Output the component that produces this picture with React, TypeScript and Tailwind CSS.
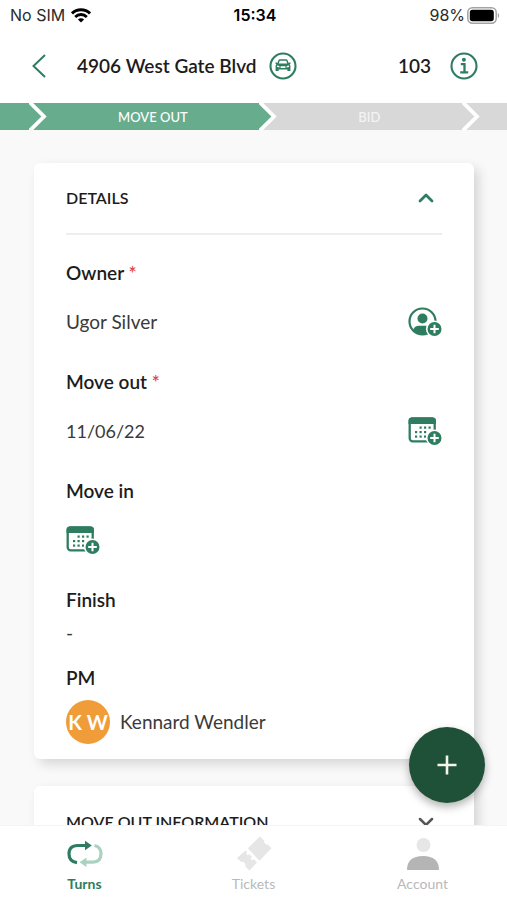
import React from 'react';
import { ChevronDown, ChevronUp } from 'lucide-react';

function WifiIcon() {
  return (
    <svg viewBox="0 0 20 15" className="w-5 h-[15px]" fill="none" stroke="#000" strokeWidth="2.9" aria-hidden="true">
      <path d="M1 5.4a12.8 12.8 0 0 1 18 0" />
      <path d="M4.2 8.9a8.2 8.2 0 0 1 11.6 0" />
      <path d="M10 14.6 6.9 11.5a4.4 4.4 0 0 1 6.2 0Z" fill="#000" stroke="none" />
    </svg>
  );
}

function BatteryIcon() {
  return (
    <svg viewBox="0 0 33 17" className="w-[33px] h-[17px]" aria-hidden="true">
      <rect x="0.8" y="0.8" width="28.4" height="15.4" rx="4.6" fill="#fff" stroke="#a3a3a3" strokeWidth="1.5" />
      <rect x="2.8" y="2.8" width="24" height="11.4" rx="2.6" fill="#000" />
      <path d="M30.8 6v5c1.8-.8 1.8-4.2 0-5Z" fill="#a3a3a3" />
    </svg>
  );
}

function CarIcon() {
  return (
    <svg viewBox="0 0 28 28" className="w-7 h-7" fill="none" stroke="#2f7d61" aria-hidden="true">
      <circle cx="14" cy="14" r="12.5" strokeWidth="2.1" />
      <path d="M8.9 12.1 10 8.6q.2-.7 1-.7h6q.8 0 1 .7l1.1 3.5" strokeWidth="1.5" />
      <path
        fill="#2f7d61"
        stroke="none"
        fillRule="evenodd"
        d="M6.5 10.6h1.9l.6 1h10l.6-1h1.9v1.2l-.9.5q.8.7.8 1.7v5h-3v-1.4H9.6V19h-3v-5q0-1 .8-1.7l-.9-.5ZM8 13.5v1.4l2.4.5v-1.3ZM20 13.5v1.4l-2.4.5v-1.3ZM11.6 14.2h4.8v1.8h-4.8Z"
      />
    </svg>
  );
}

function InfoIcon() {
  return (
    <svg viewBox="0 0 28 28" className="w-7 h-7" fill="none" stroke="#2f7d61" aria-hidden="true">
      <circle cx="14" cy="14" r="12.5" strokeWidth="2.1" />
      <circle cx="13.9" cy="7.8" r="2" fill="#2f7d61" stroke="none" />
      <path d="M10.8 12.2h3.7v7.6M10.2 20.3h8" strokeWidth="2.3" />
    </svg>
  );
}

function PlusBadge() {
  return (
    <>
      <circle cx="26.5" cy="22" r="8.6" fill="#fff" />
      <circle cx="26.5" cy="22" r="7" fill="#2f7d61" />
      <path d="M26.5 17.7v8.6M22.2 22h8.6" stroke="#fff" strokeWidth="2" />
    </>
  );
}

function OwnerAddIcon() {
  return (
    <svg viewBox="0 0 34 30" className="w-[34px] h-[30px]" aria-hidden="true">
      <circle cx="14.5" cy="14.5" r="13" fill="none" stroke="#2f7d61" strokeWidth="2.2" />
      <circle cx="14.5" cy="11.5" r="5" fill="#2f7d61" />
      <path d="M5 23q1.5-4.3 6-4.3h7q5 0 6 4.3a13 13 0 0 1-19 0Z" fill="#2f7d61" />
      <PlusBadge />
    </svg>
  );
}

const calendarDots = [
  [12.5, 11.5], [17, 11.5], [21.5, 11.5],
  [8, 16], [12.5, 16], [17, 16],
  [8, 20.5], [12.5, 20.5], [17, 20.5],
];

function CalendarAddIcon() {
  return (
    <svg viewBox="0 0 34 30" className="w-[34px] h-[30px]" aria-hidden="true">
      <rect x="1.7" y="2.5" width="25" height="22.8" rx="3" fill="#fff" stroke="#2f7d61" strokeWidth="2.3" />
      <path d="M.5 8V4.5q0-3 3-3H25q3 0 3 3V8Z" fill="#2f7d61" />
      {calendarDots.map(([x, y]) => (
        <rect key={`${x}-${y}`} x={x - 1} y={y - 1} width="2.2" height="2.2" fill="#2f7d61" />
      ))}
      <PlusBadge />
    </svg>
  );
}

function TurnsIcon() {
  return (
    <svg viewBox="0 0 36 28" className="w-9 h-7" fill="none" strokeWidth="3.2" aria-hidden="true">
      <path d="M27.5 5.5q6.5 1.5 6.5 8 0 8.5-8 8.700H17" stroke="#a9d2c1" />
      <path d="M19.5 17.500v9.400L12.500 22.200Z" fill="#a9d2c1" />
      <path d="M10 22.700q-8-1.200-8-8.700 0-8.500 8.500-8.500h8" stroke="#2f7d61" />
      <path d="M18 .8v9.400l6.800-4.700Z" fill="#2f7d61" />
    </svg>
  );
}

function TicketsIcon() {
  return (
    <svg viewBox="0 0 36 36" className="w-9 h-9" fill="#e6e6e6" aria-hidden="true">
      <path d="M11.8 12.2 23.8.4l4.400 4a3.500 3.500 0 0 0 3.600 4.200l3.700 3.600L23.500 24.800Z" />
      <path d="m9.700 14.500 1.600 1.500-1.300 1.400 1.800 2 1.400-1.300 2.800 3-1.400 1.300 1.800 2 1.400-1.300 3.200 3.300-7.400 8-4.300-4a3.500 3.500 0 0 0-4-4.500L.8 22Z" />
    </svg>
  );
}

function AccountIcon() {
  return (
    <svg viewBox="0 0 34 34" className="w-[34px] h-[34px]" aria-hidden="true">
      <circle cx="17.5" cy="8" r="7" fill="#e6e6e6" />
      <path d="M1 33q0-14 16-14t16 14Z" fill="#b5b5b5" />
    </svg>
  );
}

type SeparatorProps = { from: string; to: string };

function StepSeparator({ from, to }: SeparatorProps) {
  return (
    <svg viewBox="0 0 18 27" className="w-[18px] h-[27px] shrink-0" aria-hidden="true">
      <rect width="18" height="27" fill={to} />
      <path d="M0 0 15 13.5 0 27Z" fill={from} />
      <path d="M0-1.5 15 13.5 0 28.5" fill="none" stroke="#fff" strokeWidth="3.8" />
    </svg>
  );
}

function Stepper() {
  return (
    <div className="shrink-0 flex h-[27px] text-[13px] leading-7 font-medium text-white">
      <div className="w-[29px] bg-[#68ac8e]" />
      <StepSeparator from="#68ac8e" to="#68ac8e" />
      <button className="flex-[8] bg-[#68ac8e]">MOVE OUT</button>
      <StepSeparator from="#68ac8e" to="#d8d8d8" />
      <button className="flex-[7] bg-[#d8d8d8] text-[#f4f4f4]">BID</button>
      <StepSeparator from="#d8d8d8" to="#d8d8d8" />
      <div className="w-[27px] bg-[#d8d8d8]" />
    </div>
  );
}

function Label({ children, required }: { children: React.ReactNode; required?: boolean }) {
  return (
    <h3 className="text-[19px] leading-6 font-semibold text-[#1c1c1c]">
      {children}
      {required && <span className="text-[#e0483e]"> *</span>}
    </h3>
  );
}

export default function App() {
  return (
    <div className="h-screen flex flex-col bg-white overflow-hidden font-['Lato',sans-serif] text-[#1c1c1c]">
      {/* Status bar */}
      <div className="h-[30px] shrink-0 pl-2.5 pr-[7px] grid grid-cols-3 items-center font-['Inter',sans-serif] text-base text-[#2b2b2b]">
        <div className="flex items-center gap-1.5">
          <span>No SIM</span>
          <WifiIcon />
        </div>
        <span className="text-center font-semibold text-black">15:34</span>
        <div className="flex items-center justify-end gap-0.5">
          <span>98%</span>
          <BatteryIcon />
        </div>
      </div>

      {/* Header */}
      <header className="h-[73px] shrink-0 pl-8 pr-[29px] pb-px flex items-center">
        <button aria-label="Back" className="w-[45px]">
          <svg viewBox="0 0 14 26" className="w-3.5 h-[26px]" fill="none" stroke="#2f7d61" strokeWidth="2" aria-hidden="true">
            <path d="M13 2 1.5 13 13 24" />
          </svg>
        </button>
        <h1 className="text-[19px] font-semibold">4906 West Gate Blvd</h1>
        <button aria-label="Parking" className="ml-3">
          <CarIcon />
        </button>
        <span className="ml-auto text-[19px] font-semibold">103</span>
        <button aria-label="Info" className="ml-[19px]">
          <InfoIcon />
        </button>
      </header>

      <Stepper />

      <main className="flex-1 min-h-0 overflow-hidden bg-[#f9f9f9] pl-[34px] pr-[33px] pt-[33px] space-y-[27px]">
        <section className="px-8 pb-[15px] bg-white rounded-md shadow-[5px_5px_12px_rgba(0,0,0,0.14)]">
          <div className="h-[72px] flex items-center justify-between border-b-2 border-[#eeeeee]">
            <h2 className="text-base font-semibold">DETAILS</h2>
            <button aria-label="Collapse details" className="mr-1">
              <ChevronUp className="w-6 h-6 text-[#2f7d61]" strokeWidth={2.8} />
            </button>
          </div>

          <div className="pt-[26px] space-y-[31px]">
            <div className="space-y-5">
              <Label required>Owner</Label>
              <div className="h-[34px] flex items-center justify-between text-[19px] text-[#3a3a3a]">
                <span>Ugor Silver</span>
                <button aria-label="Change owner">
                  <OwnerAddIcon />
                </button>
              </div>
            </div>
            <div className="space-y-5">
              <Label required>Move out</Label>
              <div className="h-[34px] flex items-center justify-between text-lg text-[#3a3a3a]">
                <span>11/06/22</span>
                <button aria-label="Set move out date">
                  <CalendarAddIcon />
                </button>
              </div>
            </div>
            <div className="space-y-5">
              <Label>Move in</Label>
              <div className="h-[34px] flex items-center">
                <button aria-label="Set move in date">
                  <CalendarAddIcon />
                </button>
              </div>
            </div>
          </div>

          <div className="pt-[31px] space-y-[21px]">
            <div className="space-y-[9px]">
              <Label>Finish</Label>
              <p className="text-[19px] leading-6 text-[#3a3a3a]">-</p>
            </div>
            <div className="space-y-2.5">
              <Label>PM</Label>
              <div className="flex items-center gap-2.5 text-[19px] text-[#3a3a3a]">
                <div className="w-11 h-11 rounded-full bg-[#f09c38] flex items-center justify-center text-xl font-bold text-white">
                  K W
                </div>
                <span>Kennard Wendler</span>
              </div>
            </div>
          </div>
        </section>

        <section className="px-8 bg-white rounded-md shadow-[5px_5px_12px_rgba(0,0,0,0.14)]">
          <div className="h-[72px] flex items-center justify-between">
            <h2 className="text-base font-semibold">MOVE OUT INFORMATION</h2>
            <button aria-label="Expand move out information" className="mr-1">
              <ChevronDown className="w-6 h-6 text-[#555555]" strokeWidth={2.5} />
            </button>
          </div>
        </section>
      </main>

      <button
        aria-label="Add"
        className="fixed right-[22px] bottom-[97px] w-[76px] h-[76px] rounded-full bg-[#1f5138] flex items-center justify-center shadow-[0_4px_8px_rgba(0,0,0,0.3)]"
      >
        <svg viewBox="0 0 20 20" className="w-5 h-5" stroke="#f3f6e8" strokeWidth="2.6" aria-hidden="true">
          <path d="M10 .5v19M.5 10h19" />
        </svg>
      </button>

      {/* Bottom tabs */}
      <nav className="h-[75px] shrink-0 border-t border-[#f4f4f4] grid grid-cols-3 text-sm leading-4 text-[#b9b9b9]">
        <a href="#turns" className="pt-2.5 flex flex-col items-center gap-1 font-bold text-[#2f7d61]">
          <span className="h-9 flex items-center">
            <TurnsIcon />
          </span>
          Turns
        </a>
        <a href="#tickets" className="pt-2.5 flex flex-col items-center gap-1">
          <TicketsIcon />
          Tickets
        </a>
        <a href="#account" className="pt-2.5 flex flex-col items-center gap-1">
          <span className="h-9 flex items-center">
            <AccountIcon />
          </span>
          Account
        </a>
      </nav>
    </div>
  );
}
